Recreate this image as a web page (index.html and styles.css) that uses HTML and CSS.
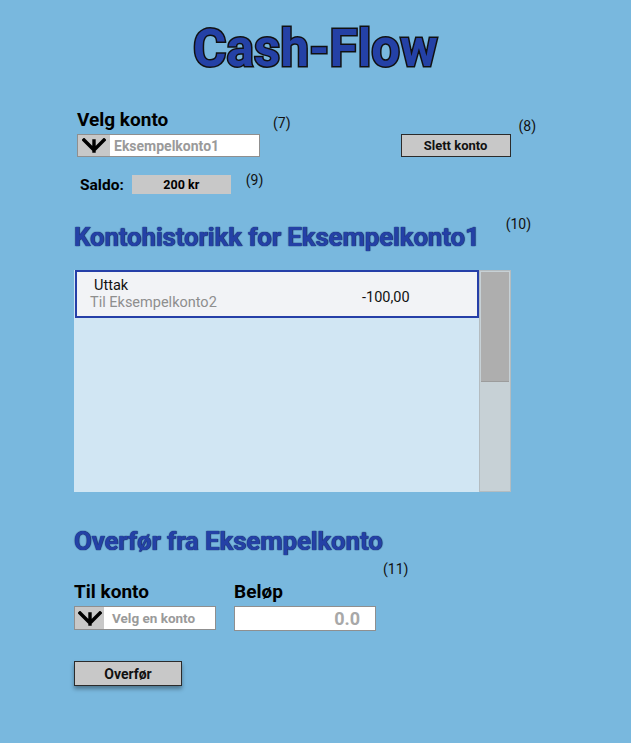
FILE: index.html
```html
<!DOCTYPE html>
<html lang="no">
<head>
<meta charset="utf-8">
<title>Cash-Flow</title>
<link rel="stylesheet" href="styles.css">
</head>
<body>
<main class="page">
  <h1 class="title">Cash-Flow</h1>

  <section class="account-row">
    <div class="field">
      <label class="label">Velg konto</label>
      <div class="select select-wide">
        <span class="select-arrow">
          <svg viewBox="0 0 24 15" width="24" height="15"><path d="M2 2 L12 12 L22 2 M12 3 V13" fill="none" stroke="#000" stroke-width="3.4" stroke-linecap="square" stroke-linejoin="miter"/></svg>
        </span>
        <span class="select-text">Eksempelkonto1</span>
      </div>
    </div>
    <span class="note note-7">(7)</span>
    <button class="btn btn-delete">Slett konto</button>
    <span class="note note-8">(8)</span>
  </section>

  <section class="balance-row">
    <span class="balance-label">Saldo:</span>
    <span class="balance-box">200 kr</span>
    <span class="note note-9">(9)</span>
  </section>

  <section class="heading-row">
    <h2 class="heading">Kontohistorikk for Eksempelkonto1</h2>
    <span class="note note-10">(10)</span>
  </section>

  <section class="history">
    <div class="list">
      <div class="item">
        <div class="item-text">
          <span class="item-title">Uttak</span>
          <span class="item-sub">Til Eksempelkonto2</span>
        </div>
        <span class="item-amount">-100,00</span>
      </div>
    </div>
    <div class="scrollbar"><div class="thumb"></div></div>
  </section>

  <section class="heading-row heading-row-2">
    <h2 class="heading">Overfør fra Eksempelkonto</h2>
  </section>
  <div class="note note-11">(11)</div>

  <section class="transfer-row">
    <div class="field">
      <label class="label">Til konto</label>
      <div class="select select-small">
        <span class="select-arrow select-arrow-small">
          <svg viewBox="0 0 24 15" width="24" height="15"><path d="M2 2 L12 12 L22 2 M12 3 V13" fill="none" stroke="#000" stroke-width="3.4" stroke-linecap="square" stroke-linejoin="miter"/></svg>
        </span>
        <span class="select-text select-text-small">Velg en konto</span>
      </div>
    </div>
    <div class="field field-amount">
      <label class="label">Beløp</label>
      <div class="amount-input">0.0</div>
    </div>
  </section>

  <button class="btn btn-transfer">Overfør</button>
</main>
</body>
</html>
```

FILE: styles.css
```css
* { box-sizing: border-box; }

html, body {
  margin: 0;
  padding: 0;
  background: #79b8de;
}

body {
  width: 631px;
  height: 743px;
  overflow: hidden;
  font-family: Roboto, "Liberation Sans", sans-serif;
  color: #000;
}

.page {
  display: flex;
  flex-direction: column;
  padding-left: 74px;
}

.title {
  margin: 19px 0 0 -74px;
  height: 60px;
  line-height: 60px;
  font-size: 51px;
  font-weight: 700;
  text-align: center;
  color: #2441a6;
  -webkit-text-stroke: 3px #111;
  paint-order: stroke fill;
  letter-spacing: 0.2px;
}

.note {
  font-size: 14px;
  font-weight: 400;
  color: #111;
}

/* account row */
.account-row {
  display: flex;
  align-items: flex-start;
  margin-top: 30px;
  height: 52px;
}

.field {
  display: flex;
  flex-direction: column;
}

.account-row .field { margin-left: 3px; }

.label {
  font-size: 19px;
  font-weight: 700;
  line-height: 22px;
  height: 25px;
}

.select {
  display: flex;
  align-items: stretch;
  height: 23px;
  border: 1px solid #8f8f8f;
  background: #fff;
}

.select-wide { width: 183px; }
.select-small { width: 142px; height: 24px; }

.select-arrow {
  width: 32px;
  background: #c8c8c8;
  display: flex;
  align-items: center;
  justify-content: center;
}
.select-arrow-small { width: 29px; }

.select-text {
  font-size: 14px;
  font-weight: 700;
  color: #9a9a9a;
  padding-left: 4px;
  display: flex;
  align-items: center;
}
.select-text-small { padding-left: 8px; font-size: 13.5px; }

.note-7 { margin: 6px 0 0 13px; }

.btn {
  font-family: Roboto, "Liberation Sans", sans-serif;
  font-weight: 700;
  background: #c8c8c8;
  border: 1px solid #2b2b2b;
  color: #111;
  padding: 0;
  cursor: pointer;
}

.btn-delete {
  margin: 25px 0 0 110px;
  width: 110px;
  height: 23px;
  font-size: 13px;
}

.note-8 { margin: 9px 0 0 8px; }

/* balance row */
.balance-row {
  display: flex;
  align-items: flex-start;
  margin-top: 14px;
  height: 24px;
}

.balance-label {
  margin: 2px 0 0 6px;
  font-size: 15.5px;
  font-weight: 700;
  line-height: 17px;
}

.balance-box {
  margin-left: 8px;
  width: 99px;
  height: 19px;
  background: #c8c8c8;
  font-size: 12.5px;
  font-weight: 700;
  display: flex;
  align-items: center;
  justify-content: center;
}

.note-9 { margin: -3px 0 0 15px; }

/* headings */
.heading-row {
  display: flex;
  align-items: flex-start;
  margin-top: 23px;
  height: 48px;
}

.heading {
  margin: 0;
  font-size: 26px;
  font-weight: 700;
  line-height: 30px;
  color: #2441a6;
  text-shadow: 0 0 1px #0f1f5e, 0 0 1px #0f1f5e;
  letter-spacing: -0.2px;
}

.note-10 { margin: -6px 0 0 26px; }

/* history list */
.history {
  display: flex;
  height: 222px;
}

.list {
  width: 405px;
  background: #d1e6f3;
}

.item {
  display: flex;
  align-items: center;
  height: 48px;
  border: 2px solid #263fa8;
  background: #f2f3f6;
  margin-left: 1px;
  width: 404px;
}

.item-text {
  display: flex;
  flex-direction: column;
  padding-left: 13px;
  width: 285px;
}

.item-title {
  font-size: 14.5px;
  line-height: 16px;
  padding-left: 4px;
  color: #111;
}

.item-sub {
  font-size: 14.5px;
  line-height: 17px;
  color: #8e8e8e;
}

.item-amount {
  font-size: 14.5px;
  color: #111;
  margin-top: 6px;
}

.scrollbar {
  width: 32px;
  background: #c7d1d6;
  border: 1px solid #b4bcc0;
  padding: 1px 1px 0 1px;
}

.thumb {
  height: 110px;
  background: #aeaeae;
  border-bottom: 1px solid #9c9c9c;
}

/* transfer */
.heading-row-2 {
  margin-top: 34px;
  height: 30px;
}

.note-11 {
  margin: 5px 0 0 309px;
  height: 20px;
}

.transfer-row {
  display: flex;
  align-items: flex-start;
  gap: 18px;
}

.amount-input {
  width: 142px;
  height: 25px;
  background: #fff;
  border: 1px solid #8f8f8f;
  font-size: 18px;
  font-weight: 700;
  color: #a8a8a8;
  text-align: right;
  padding-right: 15px;
  line-height: 23px;
}

.btn-transfer {
  margin-top: 30px;
  width: 108px;
  height: 25px;
  font-size: 14px;
  box-shadow: 0 3px 4px rgba(0, 0, 0, 0.35);
}
```
